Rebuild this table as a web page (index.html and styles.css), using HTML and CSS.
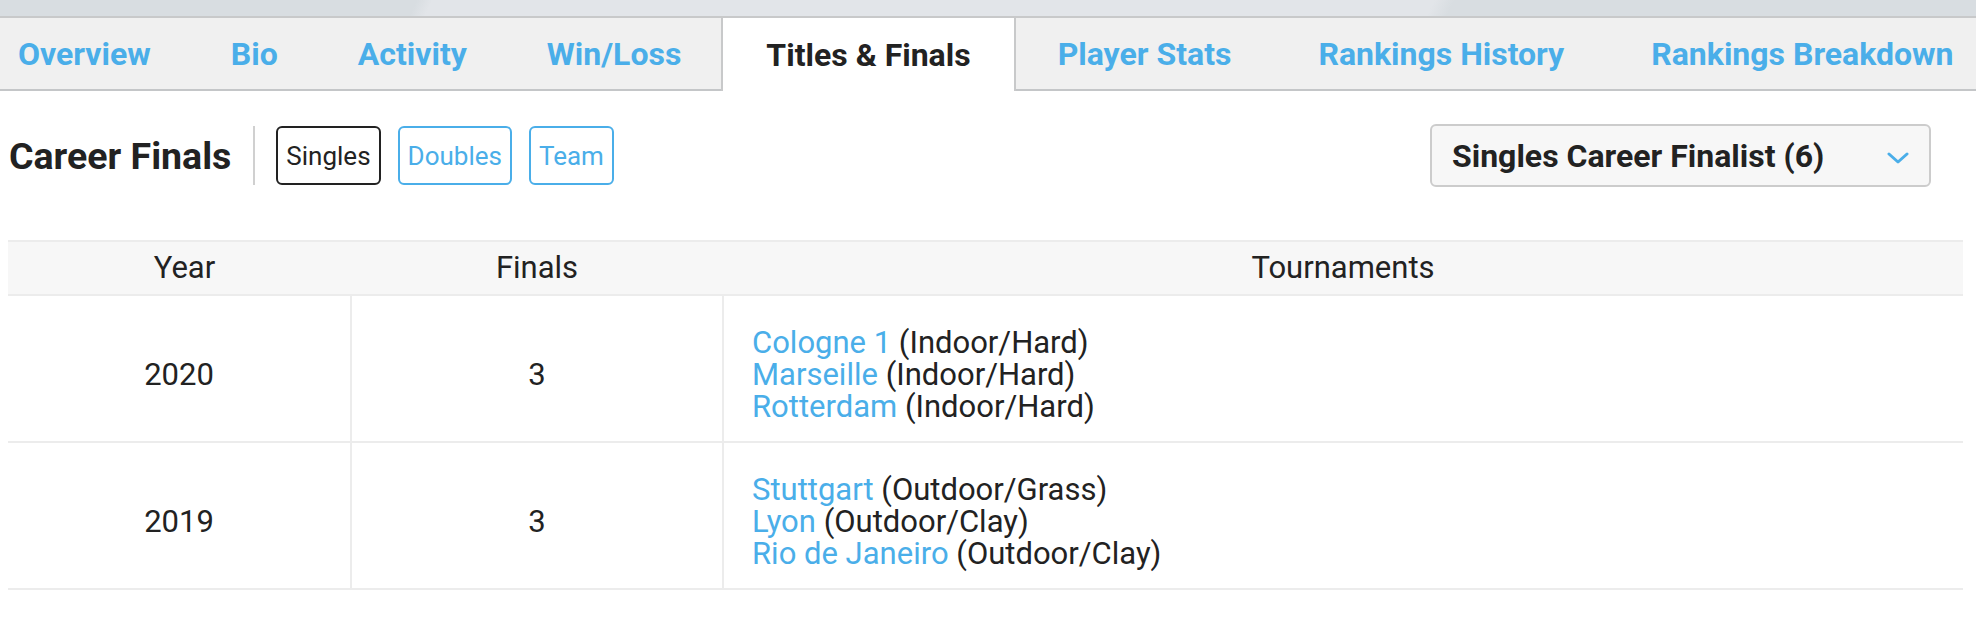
FILE: index.html
```html
<!DOCTYPE html>
<html lang="en">
<head>
<meta charset="utf-8">
<title>Titles &amp; Finals</title>
<link rel="stylesheet" href="styles.css">
</head>
<body>
<div class="top-strip"></div>
<nav class="tabs">
  <a class="tab first">Overview</a>
  <a class="tab">Bio</a>
  <a class="tab">Activity</a>
  <a class="tab">Win/Loss</a>
  <a class="tab active">Titles &amp; Finals</a>
  <a class="tab">Player Stats</a>
  <a class="tab">Rankings History</a>
  <a class="tab">Rankings Breakdown</a>
</nav>
<div class="toolbar">
  <h2 class="title">Career Finals</h2>
  <span class="divider"></span>
  <div class="filters">
    <button class="pill selected">Singles</button>
    <button class="pill">Doubles</button>
    <button class="pill">Team</button>
  </div>
  <div class="select">
    <span class="select-label">Singles Career Finalist (6)</span>
    <svg class="chev" width="22" height="12" viewBox="0 0 22 12"><path d="M2 2 L11 10 L20 2" fill="none" stroke="#4aaee9" stroke-width="3" stroke-linecap="round" stroke-linejoin="round"/></svg>
  </div>
</div>
<table class="finals">
  <colgroup><col class="c-year"><col class="c-finals"><col class="c-tour"></colgroup>
  <thead>
    <tr><th class="h-year">Year</th><th>Finals</th><th>Tournaments</th></tr>
  </thead>
  <tbody>
    <tr>
      <td class="num">2020</td>
      <td class="num">3</td>
      <td class="tour">
        <div><a>Cologne 1</a> (Indoor/Hard)</div>
        <div><a>Marseille</a> (Indoor/Hard)</div>
        <div><a>Rotterdam</a> (Indoor/Hard)</div>
      </td>
    </tr>
    <tr>
      <td class="num">2019</td>
      <td class="num">3</td>
      <td class="tour">
        <div><a>Stuttgart</a> (Outdoor/Grass)</div>
        <div><a>Lyon</a> (Outdoor/Clay)</div>
        <div><a>Rio de Janeiro</a> (Outdoor/Clay)</div>
      </td>
    </tr>
  </tbody>
</table>
</body>
</html>
```
FILE: styles.css
```css
html, body {
  margin: 0;
  padding: 0;
  background: #ffffff;
}
body {
  font-family: Roboto, "Liberation Sans", sans-serif;
  color: #222222;
  width: 1976px;
  height: 632px;
  overflow: hidden;
}
.top-strip {
  height: 16px;
  background: linear-gradient(115deg, #d8dde1 0, #d8dde1 378px, #e2e5e9 392px, #e2e5e9 1300px, #d8dde1 1318px, #d8dde1 100%);
}
.tabs {
  display: flex;
  align-items: stretch;
  height: 71px;
  background: #f0f0f0;
  border-top: 2px solid #c8c9ca;
  border-bottom: 2px solid #c4c6c8;
  white-space: nowrap;
}
.tab {
  display: flex;
  align-items: center;
  padding: 0 38px;
  font-size: 32px;
  font-weight: 700;
  color: #4aaee9;
  border-left: 2px solid transparent;
  border-right: 2px solid transparent;
}
.tab.first {
  padding-left: 16px;
}
.tab.active {
  background: #ffffff;
  color: #222222;
  border-left-color: #c8c9ca;
  border-right-color: #c8c9ca;
  margin-bottom: -2px;
  padding-left: 43px;
  padding-right: 43px;
}
.active ~ .tab {
  padding-left: 41.5px;
  padding-right: 41.5px;
}
.active + .tab {
  padding-left: 40px;
}
.toolbar {
  display: flex;
  align-items: center;
  height: 63px;
  margin-top: 33px;
  padding-left: 9px;
}
.title {
  margin: 0;
  font-size: 37.5px;
  font-weight: 700;
  color: #222222;
}
.divider {
  width: 2px;
  height: 59px;
  background: #d0d0d0;
  margin: 0 21px 0 22px;
}
.filters {
  display: flex;
  gap: 17px;
}
.pill {
  height: 59px;
  padding: 0 8px;
  border: 2px solid #4aaee9;
  border-radius: 6px;
  background: #ffffff;
  color: #4aaee9;
  font-family: Roboto, "Liberation Sans", sans-serif;
  font-size: 26px;
  font-weight: 400;
}
.pill.selected {
  border-color: #222222;
  color: #222222;
}
.select {
  margin-left: auto;
  margin-right: 45px;
  height: 59px;
  display: flex;
  align-items: center;
  border: 2px solid #cccccc;
  border-radius: 6px;
  background: #f7f7f7;
  padding-left: 20px;
  box-sizing: content-box;
  width: 477px;
}
.select-label {
  font-size: 32px;
  font-weight: 700;
  color: #222222;
  flex: 1;
}
.chev {
  margin-right: 20px;
  margin-top: 4px;
}
.finals {
  margin: 53px 0 0 8px;
  width: 1955px;
  border-collapse: collapse;
  table-layout: fixed;
  font-size: 31px;
  line-height: 32px;
}
.c-year { width: 343px; }
.c-finals { width: 372px; }
.finals th {
  font-weight: 400;
  background: #f7f7f7;
  padding: 10px 0;
  border-top: 2px solid #ececec;
  border-bottom: 2px solid #ececec;
  text-align: center;
}
.finals th.h-year {
  padding-left: 10px;
}
.finals td {
  padding: 31px 0 18px;
  border-bottom: 2px solid #ececec;
  vertical-align: middle;
}
.finals td + td {
  border-left: 2px solid #ececec;
}
.finals td.num {
  text-align: center;
}
.finals td.tour {
  padding-left: 28px;
}
.finals a {
  color: #4aaee9;
  text-decoration: none;
}
```
